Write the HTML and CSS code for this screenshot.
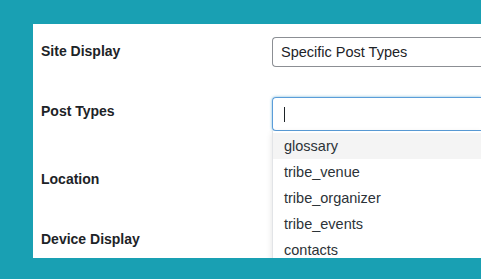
FILE: index.html
```html
<!DOCTYPE html>
<html lang="en">
<head>
    <meta charset="UTF-8">
    <meta name="viewport" content="width=device-width, initial-scale=1.0">
    <title>Display Settings</title>
    <link rel="stylesheet" href="styles.css">
</head>
<body>

    <div class="panel">

        <div class="row">
            <div class="label">Site Display</div>
            <div class="field">
                <div class="select">Specific Post Types</div>
            </div>
        </div>

        <div class="row tall">
            <div class="label">Post Types</div>
            <div class="field">
                <div class="search"><span class="caret"></span></div>
                <!-- Options menu, open -->
                <ul class="options">
                    <li class="hover">glossary</li>
                    <li>tribe_venue</li>
                    <li>tribe_organizer</li>
                    <li>tribe_events</li>
                    <li>contacts</li>
                </ul>
            </div>
        </div>

        <div class="row">
            <div class="label">Location</div>
            <div class="field"></div>
        </div>

        <div class="row">
            <div class="label">Device Display</div>
            <div class="field"></div>
        </div>

    </div>

</body>
</html>
```

FILE: styles.css
```css
html, body { overflow: hidden; }
body { margin: 0; background: #19a0b3; font-family: "Liberation Sans", Arial, sans-serif; color: #1d2327; }
.panel { margin: 24px 0 0 33px; width: 440px; height: 234px; background: #fff; overflow: hidden; padding-left: 8px; box-shadow: 0 1px 0 #7ccad5; }
.row { display: flex; align-items: flex-start; padding: 13px 0 17px; }
.row.tall { padding-bottom: 21px; }
.label { width: 231px; flex-shrink: 0; line-height: 28px; font-size: 14px; font-weight: bold; }
.field { position: relative; width: 209px; min-height: 30px; }
.select { height: 28px; line-height: 28px; border: 1px solid #8c8f94; border-right: 0; border-radius: 4px 0 0 4px; padding-left: 8px; font-size: 14.5px; }
.search { height: 32px; border: 1px solid #5b9dd9; border-right: 0; border-radius: 4px 0 0 4px; box-shadow: 0 0 3px rgba(30, 140, 190, .6); }
.caret { display: block; width: 1px; height: 15px; margin: 9px 0 0 11px; background: #1d2327; }
.options { position: absolute; top: 34px; left: 0; width: 100%; margin: 0; padding: 2px 0 0; list-style: none; background: #fff; border-left: 1px solid #e2e4e7; box-shadow: 0 2px 6px rgba(0, 0, 0, .12); }
.options li { height: 26px; line-height: 26px; padding-left: 11px; font-size: 14.5px; color: #2c3338; }
.options li.hover { background: #f4f4f4; }
```
